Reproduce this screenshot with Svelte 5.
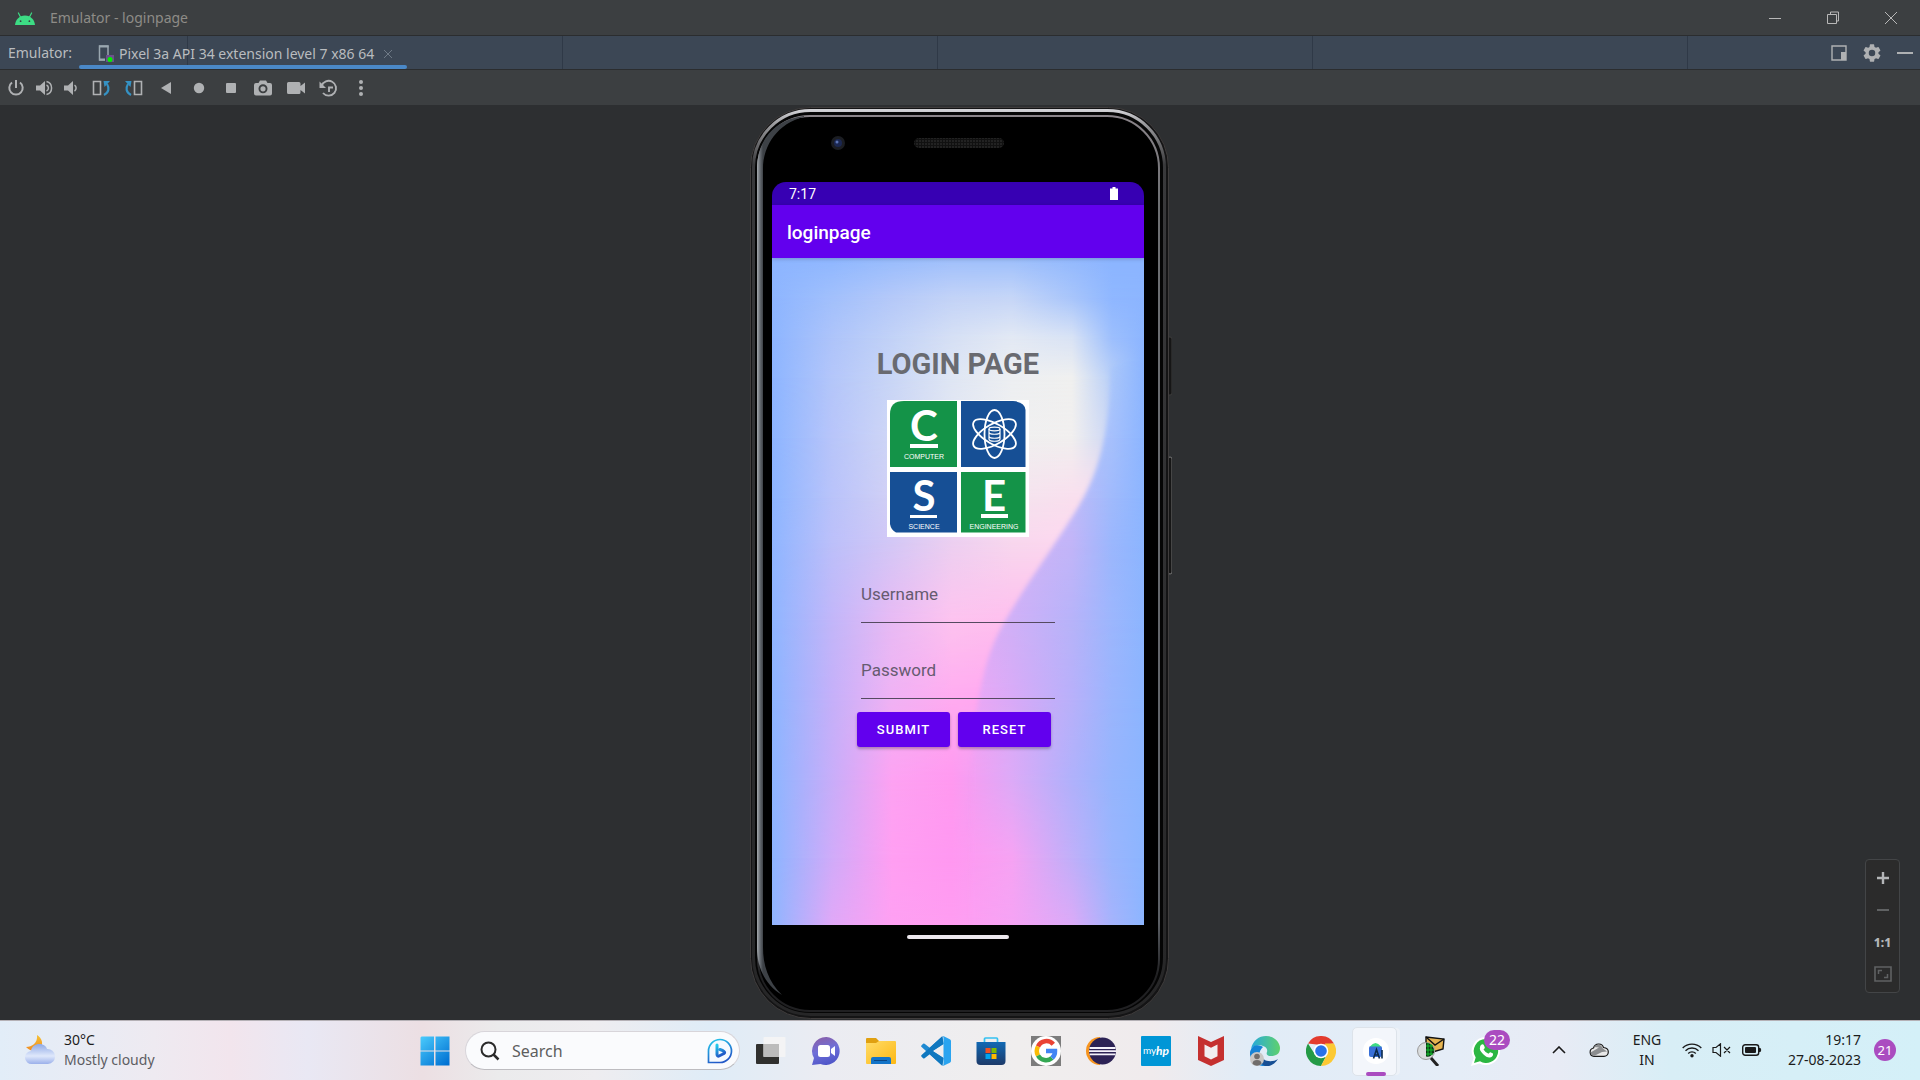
<script>
  let username = $state('');
  let password = $state('');
  let query = $state('');

  // Colour mesh of the wallpaper: each row is [y, colours at the columns below].
  const columns = [0, 60, 120, 180, 240, 300, 340, 372];
  const base = [
    [0, '#8db5ff #8fb7ff #98bcfd #9fbffc #9dbffc #93b9fe #8cb5ff #8cb5ff'],
    [40, '#8db5ff #a2c0fc #b5c9f9 #c3d3f7 #c6d6f7 #a8c5fb #8fb7ff #8cb5ff'],
    [80, '#8db5ff #aec4fa #c2d2f7 #d6e0f5 #e3e9f4 #d9e3f5 #9dbffd #8cb5ff'],
    [120, '#8db5ff #b4c6fa #c9d6f6 #dfe6f4 #edeff2 #f0f0ef #b8cff8 #8cb5ff'],
    [180, '#8db5ff #b8c5fa #cfd6f6 #e4e7f3 #f0f0f0 #f1efef #cbd6f5 #8cb5ff'],
    [240, '#8db5ff #b9c3fa #d2d0f5 #e9def1 #f4e4ee #f9dfee #f9dfee #f9dfee'],
    [282, '#8fb5ff #bcc0fa #d3c8f6 #ecd0f1 #f8d8ee #fdd8ef #fdd8ef #fdd8ef'],
    [362, '#8fb5ff #c2b6f9 #e8baf4 #fdc3ef #febfee #febfee #febfee #febfee'],
    [442, '#8db5ff #c5b0f9 #f0b2f4 #ffabf0 #ffa5f0 #ffa5f0 #ffa5f0 #ffa5f0'],
    [522, '#8db5ff #c8adf9 #fda2f2 #ff99f0 #dcaaf7 #b0b1fb #96b5fd #8cb5ff'],
    [600, '#8db5ff #d0abf9 #ff9ff2 #ff98f1 #f6a3f3 #c0aff9 #9ab5fd #8cb5ff'],
    [667, '#90b5ff #e0a8f7 #fea0f2 #ff9df1 #f5a3f4 #dbaaf7 #a5b3fc #8cb5ff']
  ];
  const shade = [
    [100, '#dfe6f4 #dfe6f4 #dfe6f4 #dfe6f4 #e8ecf3 #e5eaf3 #abc8fa #8cb5ff'],
    [180, '#c8c8f6 #c8c8f6 #c8c8f6 #c8c8f6 #c8c8f6 #b8c6f9 #a6c0fc #8cb5ff'],
    [240, '#c8b9f7 #c8b9f7 #c8b9f7 #c8b9f7 #c8b9f7 #c0bbf8 #a0bafc #8cb5ff'],
    [282, '#dab2f6 #dab2f6 #dab2f6 #dab2f6 #d3b4f6 #c2b5f8 #9bb7fd #8cb5ff'],
    [362, '#e5adf5 #e5adf5 #e5adf5 #e5adf5 #d0b0f7 #b7b3f9 #9cb6fd #8cb5ff'],
    [442, '#f5a7f3 #f5a7f3 #f5a7f3 #f5a7f3 #d9aaf7 #b8b0fa #9ab5fd #8cb5ff'],
    [522, '#8db5ff #c8adf9 #fda2f2 #ff99f0 #dcaaf7 #b0b1fb #96b5fd #8cb5ff'],
    [600, '#8db5ff #d0abf9 #ff9ff2 #ff98f1 #f6a3f3 #c0aff9 #9ab5fd #8cb5ff'],
    [667, '#90b5ff #e0a8f7 #fea0f2 #ff9df1 #f5a3f4 #dbaaf7 #a5b3fc #8cb5ff']
  ];

  function reset() {
    username = '';
    password = '';
  }
</script>

{#snippet mesh(name, rows)}
  {#each rows as [y, colours], i}
    {@const from = i ? rows[i - 1][0] : y}
    <linearGradient id="{name}-fill-{i}" gradientUnits="userSpaceOnUse" x1="0" x2="372" y1="0" y2="0">
      {#each colours.split(' ') as colour, c}
        <stop offset={columns[c] / 372} stop-color={colour} />
      {/each}
    </linearGradient>
    <linearGradient id="{name}-fade-{i}" gradientUnits="userSpaceOnUse" x1="0" x2="0" y1={from} y2={y}>
      <stop offset="0" stop-color="#fff" stop-opacity={i ? 0 : 1} /><stop offset="1" stop-color="#fff" />
    </linearGradient>
    <mask id="{name}-mask-{i}" maskUnits="userSpaceOnUse" x="0" y={from} width="372" height={667 - from}>
      <rect y={from} width="372" height={667 - from} fill={i ? `url(#${name}-fade-${i})` : '#fff'} />
    </mask>
    <rect y={from} width="372" height={667 - from} fill="url(#{name}-fill-{i})" mask="url(#{name}-mask-{i})" />
  {/each}
{/snippet}

<div class="desktop">
  <header class="titlebar">
    <svg class="android" width="20" height="14" viewBox="0 0 20 14" aria-hidden="true">
      <path d="M0 13C.4 8 4 3.500 10 3.500S19.600 8 20 13Z" fill="#3ddc84" />
      <path d="M5.500 5 3.400 1M14.500 5l2.100-4" stroke="#3ddc84" stroke-width="1.200" stroke-linecap="round" />
      <circle cx="5.600" cy="9.200" r=".9" fill="#3c3f41" /><circle cx="14.400" cy="9.200" r=".9" fill="#3c3f41" />
    </svg>
    <span class="title">Emulator - loginpage</span>
    <div class="winctl">
      <button aria-label="Minimize"><svg width="14" height="14" viewBox="0 0 14 14"><path d="M1 7.500h12" /></svg></button>
      <button aria-label="Restore"><svg width="14" height="14" viewBox="0 0 14 14"><path d="M1.500 3.500h9v9h-9zM4.500 3V1h8v9h-2" /></svg></button>
      <button aria-label="Close"><svg width="14" height="14" viewBox="0 0 14 14"><path d="m1 1 12 12M13 1 1 13" /></svg></button>
    </div>
  </header>

  <nav class="tabs">
    <span class="tabs-label">Emulator:</span>
    <div class="tab">
      <button class="tab-name">
        <svg width="16" height="18" viewBox="0 0 16 18" aria-hidden="true">
          <path d="M7 15H1.500V1h8.500v9" fill="none" stroke="#9aa7b0" stroke-width="1.500" />
          <path d="M1 1.500h9.500M1 14.500h6" stroke="#9aa7b0" stroke-width="2" />
          <rect x="8" y="10" width="8" height="7" fill="#6d4f8d" /><circle cx="12" cy="14.500" r="2.500" fill="#00f000" />
        </svg>
        Pixel 3a API 34 extension level 7 x86 64
      </button>
      <button class="tab-close" aria-label="Close tab"><svg width="10" height="10" viewBox="0 0 10 10"><path d="m1 1 8 8M9 1 1 9" stroke="#6f7a86" /></svg></button>
    </div>
    <div class="tab-tools">
      <button aria-label="Window mode"><svg width="16" height="16" viewBox="0 0 16 16"><path d="M1 1h14v14H1z" fill="none" stroke="#afb1b3" stroke-width="1.400" /><path d="M10 7h5v8h-5z" fill="#afb1b3" /></svg></button>
      <button aria-label="Settings"><svg width="18" height="18" viewBox="2 2 20 20"><path fill="#afb1b3" d="M19.140 12.940c.04-.3.060-.61.060-.94s-.02-.64-.07-.94l2.030-1.580a.49.490 0 0 0 .12-.61l-1.920-3.320a.49.490 0 0 0-.59-.22l-2.390.96a7 7 0 0 0-1.620-.94l-.36-2.540a.48.480 0 0 0-.48-.41h-3.840a.48.480 0 0 0-.47.410l-.36 2.540c-.59.240-1.130.57-1.620.94l-2.390-.96a.48.480 0 0 0-.59.220L2.740 8.870a.48.480 0 0 0 .12.610l2.030 1.580a6 6 0 0 0 0 1.880l-2.030 1.580a.49.490 0 0 0-.12.610l1.920 3.320c.12.220.37.290.59.220l2.390-.96c.5.380 1.030.7 1.620.94l.36 2.540c.05.240.24.410.48.410h3.840c.24 0 .44-.17.470-.41l.36-2.540a7 7 0 0 0 1.620-.94l2.390.96c.22.080.47 0 .59-.22l1.920-3.320a.48.480 0 0 0-.12-.61zM12 15.600a3.600 3.600 0 1 1 0-7.200 3.600 3.600 0 0 1 0 7.200"/></svg></button>
      <button aria-label="Hide"><svg width="16" height="16" viewBox="0 0 16 16"><path d="M0 8h16" stroke="#afb1b3" stroke-width="2" /></svg></button>
    </div>
  </nav>

  <div class="toolbar">
    <div class="group narrow">
      <button aria-label="Power"><svg width="18" height="18" viewBox="0 0 18 18"><path d="M5 3.500a6.700 6.700 0 1 0 8 0M9 1v8" fill="none" stroke="#afb1b3" stroke-width="2" /></svg></button>
      <button aria-label="Volume up"><svg width="18" height="18" viewBox="0 0 18 18"><path d="M1 6.500h4L10 2v14l-5-4.500H1z" fill="#afb1b3" /><path d="M11.500 6a3.300 3.300 0 0 1 0 6M11.500 2.500a6.700 6.700 0 0 1 0 13" fill="none" stroke="#afb1b3" stroke-width="1.500" /></svg></button>
      <button aria-label="Volume down"><svg width="18" height="18" viewBox="0 0 18 18"><path d="M2 6.500h4L11 2v14l-5-4.500H2z" fill="#afb1b3" /><path d="M12.500 6a3.600 3.600 0 0 1 0 6" fill="none" stroke="#afb1b3" stroke-width="1.500" /></svg></button>
    </div>
    <div class="group wide">
      <button aria-label="Rotate left"><svg width="19" height="18" viewBox="0 0 19 18"><path d="M1.500 2.500h7v13h-7z" fill="none" stroke="#afb1b3" stroke-width="1.600" /><path d="M12 16c5-2.500 5.500-7 3-11" fill="none" stroke="#3592c4" stroke-width="2.200" /><path d="M11.500 2h6.500l-5.500 6z" fill="#3592c4" /></svg></button>
      <button aria-label="Rotate right"><svg width="19" height="18" viewBox="0 0 19 18"><path d="M10.500 2.500h7v13h-7z" fill="none" stroke="#afb1b3" stroke-width="1.600" /><path d="M7 16C2 13.500 1.500 9 4 5" fill="none" stroke="#3592c4" stroke-width="2.200" /><path d="M7.500 2H1l5.500 6z" fill="#3592c4" /></svg></button>
      <button aria-label="Back"><svg width="12" height="12" viewBox="0 0 12 12"><path d="M11 0v12L1 6z" fill="#afb1b3" /></svg></button>
      <button aria-label="Home"><svg width="12" height="12" viewBox="0 0 12 12"><circle cx="6" cy="6" r="5.200" fill="#afb1b3" /></svg></button>
      <button aria-label="Overview"><svg width="12" height="12" viewBox="0 0 12 12"><rect x="1" y="1" width="10" height="10" rx="1" fill="#afb1b3" /></svg></button>
      <button aria-label="Screenshot"><svg width="18" height="18" viewBox="0 0 18 18"><path fill-rule="evenodd" fill="#afb1b3" d="M6 1.500h6L13.500 4H16a2 2 0 0 1 2 2v8.500a2 2 0 0 1-2 2H2a2 2 0 0 1-2-2V6a2 2 0 0 1 2-2h2.500zM9 5.300a4.500 4.500 0 1 0 0 9 4.500 4.500 0 0 0 0-9m0 1.900a2.600 2.600 0 1 1 0 5.200 2.600 2.600 0 0 1 0-5.200" /></svg></button>
      <button aria-label="Record"><svg width="18" height="14" viewBox="0 0 18 14"><path fill="#afb1b3" d="M1.500 1H12a1.500 1.500 0 0 1 1.500 1.500V5L18 1.500v11L13.500 9v2.500A1.500 1.500 0 0 1 12 13H1.500A1.500 1.500 0 0 1 0 11.500v-9A1.500 1.500 0 0 1 1.500 1" /></svg></button>
      <button aria-label="Snapshots"><svg width="19" height="18" viewBox="0 0 19 18"><path d="M2.600 7A7.400 7.400 0 1 1 4 14M10 13V8.500h4" fill="none" stroke="#afb1b3" stroke-width="1.900" /><path d="M.5 2.500V9H7z" fill="#afb1b3" /></svg></button>
      <button aria-label="More"><svg width="6" height="16" viewBox="0 0 6 16"><circle cx="3" cy="2" r="2" fill="#afb1b3" /><circle cx="3" cy="8" r="2" fill="#afb1b3" /><circle cx="3" cy="14" r="2" fill="#afb1b3" /></svg></button>
    </div>
  </div>

  <main>
    <div class="phone">
      <svg class="bezel" viewBox="0 0 424 912" preserveAspectRatio="none" aria-hidden="true">
        <defs>
          <linearGradient id="rim" x2="0" y2="1"><stop offset="0" stop-color="#d0d0d4" /><stop offset=".015" stop-color="#9b9b9e" /><stop offset=".06" stop-color="#39393b" /><stop offset="1" stop-color="#262627" /></linearGradient>
          <linearGradient id="glass" x2="0" y2="1"><stop offset="0" stop-color="#8a8489" /><stop offset=".1" stop-color="#6e7073" /><stop offset=".9" stop-color="#5c6066" /><stop offset=".96" stop-color="#202022" /></linearGradient>
          <linearGradient id="sheen" gradientUnits="userSpaceOnUse" x1="9" x2="15" y1="0" y2="0"><stop offset="0" stop-color="#a5a9ad" /><stop offset=".5" stop-color="#686d73" /><stop offset="1" stop-color="#3d4146" /></linearGradient>
          <pattern id="mesh" width="3" height="3" patternUnits="userSpaceOnUse"><rect width="3" height="3" fill="#111" /><circle cx="1" cy="1" r=".8" fill="#363838" /></pattern>
        </defs>
        <rect x="419" y="230" width="5" height="58" rx="2" fill="#161616" stroke="#3c3c3c" />
        <rect x="420" y="350" width="4" height="117" rx="2" fill="#161616" stroke="#777" />
        <rect x="2.500" y=".5" width="418" height="911" rx="60" fill="#141415" stroke="#403d3d" />
        <rect x="5.500" y="3.500" width="411" height="904" rx="57" fill="#050505" stroke="url(#rim)" stroke-width="3" />
        <rect x="10" y="9" width="401" height="895" rx="52" fill="#000" stroke="url(#glass)" stroke-width="2" />
        <path d="M30 25C18 36 12 46 12 62V840C12 860 18 872 32 886 20 874 16 860 16 840V62C16 46 20 36 30 25Z" fill="none" />
        <path d="M56 9C28 12 9 32 9 62V840C9 862 18 878 34 888 20 874 15 858 15 840V62C15 38 30 16 56 10Z" fill="url(#sheen)" />
        <circle cx="90" cy="36" r="7" fill="#1b1d22" /><circle cx="90" cy="36" r="4" fill="#1b2750" /><circle cx="89" cy="35" r="1.500" fill="#5b74b5" />
        <rect x="166" y="31" width="90" height="10" rx="5" fill="url(#mesh)" />
      </svg>

      <div class="screen">
        <div class="status">
          <span>7:17</span>
          <svg width="8" height="13" viewBox="0 0 8 13" aria-label="Battery"><path d="M2.500 0h3v1.500H8V13H0V1.500h2.500z" fill="#fff" /></svg>
        </div>
        <div class="appbar">loginpage</div>
        <div class="page">
          <svg class="wallpaper" viewBox="0 0 372 667" preserveAspectRatio="none" aria-hidden="true">
            <defs>
              <filter id="soft" x="-10%" y="-10%" width="120%" height="120%"><feGaussianBlur stdDeviation="2" /></filter>
              <mask id="curve" maskUnits="userSpaceOnUse" x="0" y="0" width="372" height="667">
                <path filter="url(#soft)" d="M420 60 338 110C338 180 326 220 298 262 274 300 248 335 228 372 212 402 206 440 201 480 199 540 199 610 199 700H420Z" fill="#fff" />
              </mask>
            </defs>
            {@render mesh('base', base)}
            <g mask="url(#curve)">{@render mesh('shade', shade)}</g>
          </svg>
          <form onsubmit={(e) => e.preventDefault()}>
            <h1>LOGIN PAGE</h1>
            <svg class="logo" width="142" height="137" viewBox="0 0 142 137" role="img" aria-label="Computer Science Engineering">
              <rect width="142" height="137" fill="#fff" />
              <path d="M3 67V14Q3 1 17 1H70V67Z" fill="#149348" />
              <path d="M74 1H126Q138 2 138.500 10V67H74Z" fill="#164f95" />
              <path d="M3 72H70V132.500H9Q4 130 3 124Z" fill="#164f95" />
              <path d="M74 72H138.500V132.500H74Z" fill="#149348" />
              <g fill="#fff">
                <path d="M23 44h28v4H23zM23 115h27v3H23zM94 114h27v4H94z" />
                <g class="initial"><text x="37" y="41">C</text><text x="37" y="111">S</text><text x="107" y="111">E</text></g>
                <g class="caption"><text x="37" y="59">COMPUTER</text><text x="37" y="129">SCIENCE</text><text x="107" y="129">ENGINEERING</text></g>
              </g>
              <g fill="none" stroke="#fff" stroke-width="1.800">
                <ellipse cx="107.500" cy="34" rx="10" ry="24" />
                <ellipse cx="107.500" cy="34" rx="10" ry="24" transform="rotate(60 107.500 34)" />
                <ellipse cx="107.500" cy="34" rx="10" ry="24" transform="rotate(-60 107.500 34)" />
                <path stroke-width="1.200" d="M102 29v10c0 3 11 3 11 0V29M102 32c0 3 11 3 11 0M102 36c0 3 11 3 11 0" />
                <ellipse cx="107.500" cy="29" rx="5.500" ry="1.800" stroke-width="1.200" />
              </g>
            </svg>
            <input class="field first" type="text" aria-label="Username" placeholder="Username" bind:value={username} />
            <input class="field" type="password" aria-label="Password" placeholder="Password" bind:value={password} />
            <div class="actions">
              <button type="submit">SUBMIT</button>
              <button type="button" onclick={reset}>RESET</button>
            </div>
          </form>
        </div>
      </div>
      <div class="handle"></div>
    </div>

    <div class="zoom">
      <button aria-label="Zoom in"><svg width="14" height="14" viewBox="0 0 14 14"><path d="M7 1v12M1 7h12" stroke="#b4b6b8" stroke-width="2.400" /></svg></button>
      <button aria-label="Zoom out"><svg width="14" height="14" viewBox="0 0 14 14"><path d="M1 7h12" stroke="#606263" stroke-width="2" /></svg></button>
      <button class="ratio">1:1</button>
      <button aria-label="Fit to window"><svg width="18" height="16" viewBox="0 0 18 16"><path d="M1 1h16v14H1z" fill="none" stroke="#606263" stroke-width="1.600" /><path d="M4.500 8V4.500H8M10 11.500h3.500V8" fill="none" stroke="#606263" stroke-width="1.500" /></svg></button>
    </div>
  </main>

  <footer>
    <button class="weather">
      <svg width="30" height="30" viewBox="0 0 30 30" aria-hidden="true">
        <defs>
          <linearGradient id="moon" x2="0" y2="1"><stop offset="0" stop-color="#f5c234" /><stop offset="1" stop-color="#f08a24" /></linearGradient>
          <linearGradient id="cloud" x2="0" y2="1"><stop offset="0" stop-color="#8fa9e6" /><stop offset=".6" stop-color="#dfe8fb" /><stop offset="1" stop-color="#9bb0ea" /></linearGradient>
        </defs>
        <path d="M12 0c5 3 7 9 3 13-3 4-9 4-14-1 6 0 12-4 11-12" fill="url(#moon)" />
        <path d="M7 29a6.500 6.500 0 0 1-1-13c1-9 14-9 16-2a7.500 7.500 0 1 1 1 15z" fill="url(#cloud)" />
      </svg>
      <span><b>30°C</b><i>Mostly cloudy</i></span>
    </button>

    <div class="dock">
      <button class="app" aria-label="Start">
        <svg width="30" height="30" viewBox="0 0 30 30"><defs><linearGradient id="win" gradientUnits="userSpaceOnUse" x1="0" y1="0" x2="26" y2="30"><stop offset="0" stop-color="#4ccdfd" /><stop offset="1" stop-color="#0070d2" /></linearGradient></defs><path d="M1.500.5H14v14H.5v-13zM15.500.5h14v14h-14zM.5 15.500H14v14H.5zM15.500 15.500h14v14h-14z" fill="url(#win)" /></svg>
      </button>
      <label class="search">
        <svg width="20" height="20" viewBox="0 0 20 20" aria-hidden="true"><circle cx="8.500" cy="8.500" r="7" fill="none" stroke="#2a2a2a" stroke-width="2" /><path d="m13.500 13.500 5 5" stroke="#2a2a2a" stroke-width="2.500" /></svg>
        <input type="text" placeholder="Search" aria-label="Search" bind:value={query} />
        <svg width="26" height="26" viewBox="0 0 26 26" aria-hidden="true"><defs><linearGradient id="bing" x1="0" x2=".4" y2="1"><stop offset="0" stop-color="#24ccec" /><stop offset="1" stop-color="#2259c8" /></linearGradient></defs><path d="M1.500 24.500V13A11.500 11.500 0 1 1 13 24.500z" fill="#f6faff" stroke="url(#bing)" stroke-width="1.700" /><path d="M10 7v9.500c0 1 1 2 2 1.500l5-2.500c2-1.500-1-3-4-4" fill="none" stroke="url(#bing)" stroke-width="3" stroke-linecap="round" stroke-linejoin="round" /></svg>
      </label>

      <button class="app" aria-label="Task view"><svg width="30" height="30" viewBox="0 0 30 30"><rect y="8" width="23" height="20" rx="1" fill="#30302e" /><rect x="7.500" y="1" width="22" height="20" rx="1" fill="#f4f4f4" opacity=".95" /><path d="M7.500 8H23v13H7.500z" fill="#bcbcbc" /></svg></button>
      <button class="app" aria-label="Chat"><svg width="30" height="30" viewBox="0 0 30 30"><defs><linearGradient id="chat" x1=".2" x2=".5" y2="1"><stop offset="0" stop-color="#8a5fa8" /><stop offset=".5" stop-color="#6f6fd8" /><stop offset="1" stop-color="#4f56c8" /></linearGradient></defs><path d="M15.500 1a14 14 0 1 1-6 27L1 29l2-7A14 14 0 0 1 15.500 1" fill="url(#chat)" /><rect x="7" y="9" width="12" height="12" rx="2.500" fill="#fff" /><path d="m20 13 4-3v10l-4-3z" fill="#fff" /></svg></button>
      <button class="app" aria-label="File Explorer"><svg width="30" height="30" viewBox="0 0 30 30"><defs><linearGradient id="dir" x2="1" y2="1"><stop offset="0" stop-color="#ffdc69" /><stop offset="1" stop-color="#fdb813" /></linearGradient></defs><path d="M0 3q0-1 1-1h9l3 3v5H0z" fill="#e0a010" /><path d="M0 7h10l3-2h16q1 0 1 1v21q0 1-1 1H1q-1 0-1-1z" fill="url(#dir)" /><path d="M5 28v-5q0-2 2-2h16q2 0 2 2v5z" fill="#1374c8" /><path d="M8 24.500h13" stroke="#0a4684" /></svg></button>
      <button class="app" aria-label="Visual Studio Code"><svg width="30" height="30" viewBox="0 0 100 100"><path d="M71 1 29 39 12 26q-3-2-5 0l-5 5q-3 3 0 6l69 62 4-26-36-23 36-23z" fill="#1f8ad2" /><path d="m71 99-42-38-17 13q-3 2-5 0l-5-5q-3-3 0-6L71 1l4 26-36 23 36 23z" fill="#0f77bf" /><path d="M75 99q-3 1-5-2 5 4 5-4V7q0-8-5-4 2-3 6-2l20 10q4 2 4 6v66q0 4-4 6z" fill="#2aa4f0" /></svg></button>
      <button class="app" aria-label="Microsoft Store"><svg width="30" height="30" viewBox="0 0 30 30"><defs><linearGradient id="store" x2="0" y2="1"><stop offset="0" stop-color="#1169b4" /><stop offset="1" stop-color="#1d3a69" /></linearGradient></defs><path d="M8.500 7V3q0-1 1-1h11q1 0 1 1v4" fill="none" stroke="#35c1f1" stroke-width="1.700" /><path d="M.5 6h29v19q0 4-4 4h-21q-4 0-4-4z" fill="url(#store)" /><path d="M9.500 12h5v5h-5z" fill="#f25022" /><path d="M15.500 12h5v5h-5z" fill="#7fba00" /><path d="M9.500 18h5v5h-5z" fill="#00a4ef" /><path d="M15.500 18h5v5h-5z" fill="#ffb900" /></svg></button>
      <button class="app" aria-label="Google"><svg width="30" height="30" viewBox="0 0 30 30"><path d="M0 0h30v30H0z" fill="#7c7c7c" /><circle cx="15" cy="15" r="15" fill="#fff" /><g fill="none" stroke-width="4.500"><path d="M22.300 8.200A9.200 9.200 0 0 0 7 10.500" stroke="#ea4335" /><path d="M7 10.500a9.200 9.200 0 0 0 0 9" stroke="#fbbc05" /><path d="M7 19.500a9.200 9.200 0 0 0 14 2.500" stroke="#34a853" /><path d="M21 22a9 9 0 0 0 3-7h-9" stroke="#4285f4" /></g></svg></button>
      <button class="app" aria-label="Eclipse"><svg width="30" height="30" viewBox="0 0 30 30"><path d="M14 1a14 14 0 0 0 0 28" fill="#f7941e" /><circle cx="16.500" cy="15" r="13.500" fill="#2c2255" /><path d="M3.500 12h26M3 15.200h27M3.500 18.400h26" stroke="#f4f1fa" stroke-width="1.800" /></svg></button>
      <button class="app" aria-label="myHP"><svg width="30" height="30" viewBox="0 0 30 30"><rect width="30" height="30" rx="1" fill="#0096d6" /><text class="my" x="2" y="18">my</text><text class="hp" x="15" y="19">hp</text></svg></button>
      <button class="app" aria-label="McAfee"><svg width="28" height="30" viewBox="0 0 28 30"><path d="m1 0 13 6L27 0v24l-13 6-13-6z" fill="#c5302f" /><path d="m7.500 8.500 6.500 3.200 6.500-3.200v11.700L14 23.500l-6.500-3.300z" fill="#f1eef0" /></svg></button>
      <button class="app" aria-label="Edge"><svg width="31" height="30" viewBox="0 0 31 30"><defs><linearGradient id="edge"><stop offset="0" stop-color="#27a9dc" /><stop offset="1" stop-color="#5fd16d" /></linearGradient></defs><path d="M1 13C3 4 9 0 16 0c9 0 14 7 14 12 0 6-4 8-9 8-4 0-5-2-4-4 2-6-10-10-16-3" fill="url(#edge)" /><path d="M0 16C2 8 9 8 13 11c-6 5-4 14 3 19C7 31-1 24 0 16" fill="#1583d6" /><path d="M11 17c0 9 11 10 17 6-4 6-9 8-13 7-5-2-7-8-4-13" fill="#174f94" /><circle cx="7" cy="23" r="7" fill="#c9c7c5" /><circle cx="7" cy="20.500" r="2.800" fill="#706d6b" /><path d="M2.500 28q0-4 4.500-4t4.500 4q-4.500 3.500-9 0" fill="#706d6b" /></svg></button>
      <button class="app" aria-label="Chrome"><svg width="30" height="30" viewBox="0 0 30 30"><path d="M2 7.500a15 15 0 0 1 26 0L15 9z" fill="#e33b2e" /><path d="M2 7.500A15 15 0 0 0 15 30l6-11.500L9 18.500z" fill="#249a46" /><path d="M28 7.500A15 15 0 0 1 15 30l6-11.500L19 7.500z" fill="#fcc934" /><circle cx="15" cy="15" r="7.300" fill="#fff" /><circle cx="15" cy="15" r="5.800" fill="#2a72e8" /></svg></button>
      <button class="app active" aria-label="Android Studio">
        <svg width="26" height="26" viewBox="0 0 26 26"><circle cx="13" cy="13" r="13" fill="#fff" /><rect x="6" y="8" width="13" height="11" rx="2" fill="#3870d8" /><path d="M7 8.500q5.500-7 11 0z" fill="#3ddc84" /><path d="m10.500 20.500 3-9 3 9M11.500 17h4M19 12v8.500" fill="none" stroke="#0c2b4b" stroke-width="1.600" /></svg>
      </button>
      <button class="app" aria-label="Packet capture"><svg width="30" height="30" viewBox="0 0 30 30"><path d="m10 1 18 2-1 10-17 5z" fill="#e6b450" stroke="#111" stroke-width="1.400" /><path d="m10 1 9 8 9-6" fill="none" stroke="#111" stroke-width="1.400" /><circle cx="10" cy="15" r="8.500" fill="#d9dcdd" stroke="#999" /><path d="M10 6.500a8.500 8.500 0 0 1 8 10q-3 5-8 4z" fill="#0b3a12" /><path d="M12 7v13M15 8v11M10 10h7M10 14h8M10 18h7" stroke="#12c02d" /><path d="m15 22 7 8" stroke="#222" stroke-width="3" /></svg></button>
      <button class="app" aria-label="WhatsApp, 22 unread">
        <svg width="30" height="30" viewBox="0 0 30 30"><path d="M15 1a14 14 0 1 1-6.500 26.400L0 30l2.600-8A14 14 0 0 1 15 1" fill="#fff" /><path d="M15 3a12 12 0 1 1-6 22.300L3 27l1.700-5.500A12 12 0 0 1 15 3" fill="#2cb742" /><path d="M10 9q2-1.500 3 .5l.8 2q0 1-1.300 2 1.800 3 5 4.300 1-1.800 2-1.600l2.500 1.300q.5 3-3 4-3 .5-7-3.500T9 11.500q0-1.800 1-2.500" fill="#fff" /></svg>
        <span class="count">22</span>
      </button>
    </div>

    <div class="tray">
      <button class="chev" aria-label="Hidden icons"><svg width="14" height="8" viewBox="0 0 14 8"><path d="m1 7 6-6 6 6" fill="none" stroke="#1a1a1a" stroke-width="1.600" /></svg></button>
      <button class="onedrive" aria-label="OneDrive"><svg width="20" height="14" viewBox="0 0 20 14"><path d="M5 13.300A4.200 4.200 0 0 1 4.500 5C6 0 13-.5 14.500 4.500c3 .3 4.800 2 4.800 4.500s-2 4.300-4.300 4.300z" fill="#e9e9e9" stroke="#1a1a1a" stroke-width="1.200" /><path d="M1.500 9.500 10 4.500l-5-.5Q8 .5 12 2.500l2 3 4 3-5 .5-8 4q-3-.5-3.500-3.500" fill="#8b8d8f" /></svg></button>
      <button class="lang"><span>ENG</span><span>IN</span></button>
      <button class="net" aria-label="Network, volume and battery">
        <svg width="20" height="16" viewBox="0 0 20 16"><g fill="none" stroke="#1a1a1a" stroke-width="1.400"><path d="M.7 6a13 13 0 0 1 18.600 0M3.500 8.700a9.200 9.200 0 0 1 13 0M6.200 11.400a5.400 5.400 0 0 1 7.600 0" /></g><circle cx="10" cy="13.700" r="1.700" fill="#1a1a1a" /></svg>
        <svg width="20" height="14" viewBox="0 0 20 14"><path d="M1 4.500h3L8.500.8v12.400L4 9.500H1zM12 4l6 6M18 4l-6 6" fill="none" stroke="#1a1a1a" stroke-width="1.200" /></svg>
        <svg width="20" height="12" viewBox="0 0 20 12"><rect x=".7" y=".7" width="16" height="10.600" rx="2.500" fill="none" stroke="#1a1a1a" stroke-width="1.400" /><rect x="3" y="3" width="11" height="6" rx="1" fill="#1a1a1a" /><path d="M17 4h1.500q1.500 2 0 4H17z" fill="#1a1a1a" /></svg>
      </button>
      <button class="clock"><span>19:17</span><span>27-08-2023</span></button>
      <span class="notices">21</span>
    </div>
  </footer>
</div>

<style>
  :global(body) { margin: 0; }
  .desktop {
    display: flex;
    flex-direction: column;
    min-height: 100vh;
    background: #2d2f31;
    font-family: "Noto Sans", "Open Sans", sans-serif;
    font-size: 14px;
  }
  button {
    display: flex;
    align-items: center;
    justify-content: center;
    margin: 0;
    padding: 0;
    border: 0;
    background: none;
    color: inherit;
    font: inherit;
  }
  svg { display: block; flex: none; }

  .titlebar { display: flex; align-items: center; height: 35px; padding-left: 15px; background: #3c3f41; border-bottom: 1px solid #2b2d2f; color: #8e8c87; }
  .title { margin-left: 15px; }
  .android { margin-top: 2px; }
  .winctl { display: flex; align-self: stretch; margin-left: auto; }
  .winctl button { width: 58px; }
  .winctl path { fill: none; stroke: #b8b8b8; }

  .tabs {
    display: flex;
    align-items: center;
    height: 33px;
    padding: 0 3px 0 8px;
    border-bottom: 1px solid #2b2d2f;
    background: linear-gradient(90deg, #2f3947 1px, #3c4755 1px) 187px 0 / 375px 100%;
    color: #b9bcbf;
  }
  .tabs-label { width: 71px; }
  .tab { display: flex; align-items: center; align-self: stretch; box-sizing: border-box; padding: 2px 14px 0 19px; position: relative; }
  .tab::after { content: ""; position: absolute; inset: auto 0 0; height: 4px; border-radius: 2px; background: #4a88c7; }
  .tab-name { gap: 5px; }
  .tab-close { margin-left: 9px; }
  .tab-tools { display: flex; gap: 9px; margin-left: auto; }
  .tab-tools button { width: 24px; }

  .toolbar { display: flex; height: 35px; padding-left: 2px; background: #3c3f41; }
  .group { display: flex; }
  .group button { flex: 1; }
  .narrow { width: 83px; }
  .wide { width: 292px; }

  main { position: relative; flex: 1; display: flex; justify-content: center; align-items: flex-start; padding: 2px 0 1px; }
  .phone { position: relative; display: flex; flex-direction: column; align-items: center; box-sizing: border-box; width: 424px; min-height: 912px; padding: 75px 28px 0 24px; font-family: Roboto, sans-serif; }
  .bezel { position: absolute; inset: 0; width: 100%; height: 100%; }
  .screen { position: relative; width: 100%; border-radius: 14px 14px 0 0; overflow: hidden; }
  .status { display: flex; align-items: center; justify-content: space-between; height: 23px; padding: 0 26px 0 17px; background: #3700b3; color: #fff; }
  .appbar { position: relative; z-index: 1; height: 53px; padding-left: 15px; background: #6200ee; box-shadow: 0 1px 4px #0003; color: #fff; font-size: 19px; font-weight: 500; line-height: 55px; }
  .page { position: relative; display: flex; justify-content: center; min-height: 667px; }
  .wallpaper { position: absolute; inset: 0; width: 100%; height: 100%; }
  form { position: relative; display: flex; flex-direction: column; align-items: center; width: 202px; padding-top: 88px; }
  h1 { margin: 0; color: #696a70; font-size: 29px; font-weight: 700; line-height: 36px; white-space: nowrap; }
  .logo { margin-top: 18px; }
  .initial { font: 700 42px Lato, sans-serif; text-anchor: middle; }
  .caption { font: 7px "Liberation Sans", sans-serif; text-anchor: middle; }
  .field { box-sizing: border-box; width: 194px; height: 60px; margin: 16px 0 0; padding: 2px 0 0; border: 0; border-bottom: 1px solid #554a60; border-radius: 0; outline: 0; background: none; color: #333; font: 17px Roboto, sans-serif; }
  .field.first { margin-top: 26px; }
  .field::placeholder { color: #665b70; opacity: 1; }
  .actions { display: flex; align-self: stretch; gap: 8px; margin-top: 13px; }
  .actions button { width: 93px; height: 35px; border-radius: 3px; background: #6200ee; box-shadow: 0 2px 3px #0004; color: #fff; font-size: 13px; font-weight: 500; letter-spacing: 1px; }
  .handle { position: relative; width: 102px; height: 4px; margin-top: 10px; border-radius: 2px; background: #ece8ee; }

  .zoom { position: absolute; right: 20px; bottom: 27px; display: flex; flex-direction: column; box-sizing: border-box; width: 35px; padding: 2px 0; border: 1px solid #434547; border-radius: 4px; background: #2b2b2b; color: #b4b6b8; }
  .zoom button { height: 32px; }
  .zoom .ratio { font-size: 12px; font-weight: 800; }

  footer {
    display: grid;
    grid-template-columns: 1fr auto 1fr;
    height: 59px;
    border-top: 1px solid #b5b1b6;
    background: linear-gradient(90deg, #e2edf8, #eeeaf1 8%, #f2e5ed 12%, #e9e8f4 16%, #ecdfe3 22%, #ebebec 26%, #eeedf0 31%, #dfecf7 37%, #ebecf2 43%, #f0eeee 53%, #f0ebed 60%, #e1ecf7 65%, #e5edf7 76%, #e8ebf5 81%, #d8eef6 87%, #d4f0f8);
    color: #1c1c1c;
  }
  .weather { justify-self: start; gap: 9px; padding: 0 0 2px 25px; text-align: left; line-height: 20px; }
  .weather b, .weather i { display: block; font-style: normal; font-weight: 400; }
  .weather i { color: #5d5d63; }
  .dock { display: flex; align-items: center; }
  .app { position: relative; width: 55px; height: 50px; }
  .search { display: flex; align-items: center; box-sizing: border-box; width: 275px; height: 39px; margin: 0 3px; padding: 0 6px 0 14px; border: 1px solid #d8d5da; border-bottom-color: #bdbcc0; border-radius: 20px; background: #fafbfd; }
  .search input { flex: 1; min-width: 0; padding: 0 0 0 12px; border: 0; outline: 0; background: none; color: #333; font: 16px "Noto Sans", "Open Sans", sans-serif; }
  .search input::placeholder { color: #5e5e5e; opacity: 1; }
  .my { fill: #fff; font: 10px Lato, sans-serif; }
  .hp { fill: #fff; font: italic 700 12px Lato, sans-serif; }
  .active::before { content: ""; position: absolute; inset: 1px 6px 0 4px; border: 1px solid #dde3ea; border-radius: 5px; background: #f3f6fb; box-shadow: 4px 0 0 -1px #edf2f8; }
  .active::after { content: ""; position: absolute; left: 18px; bottom: 0; width: 20px; height: 4px; border-radius: 2px; background: #aa4cc0; }
  .active svg { position: relative; }
  .count, .notices { display: flex; align-items: center; justify-content: center; background: #aa4cc0; color: #fff; }
  .count { position: absolute; top: 4px; right: 3px; width: 26px; height: 20px; border-radius: 10px; }
  .tray { display: flex; align-items: center; justify-self: end; padding: 0 24px 2px 0; line-height: 20px; white-space: nowrap; }
  .chev { width: 40px; }
  .onedrive { width: 40px; }
  .lang { flex-direction: column; width: 56px; }
  .net { gap: 10px; width: 94px; }
  .clock { flex-direction: column; align-items: flex-end; width: 92px; margin-right: 13px; }
  .notices { width: 22px; height: 22px; border-radius: 50%; font-size: 13px; }
</style>
